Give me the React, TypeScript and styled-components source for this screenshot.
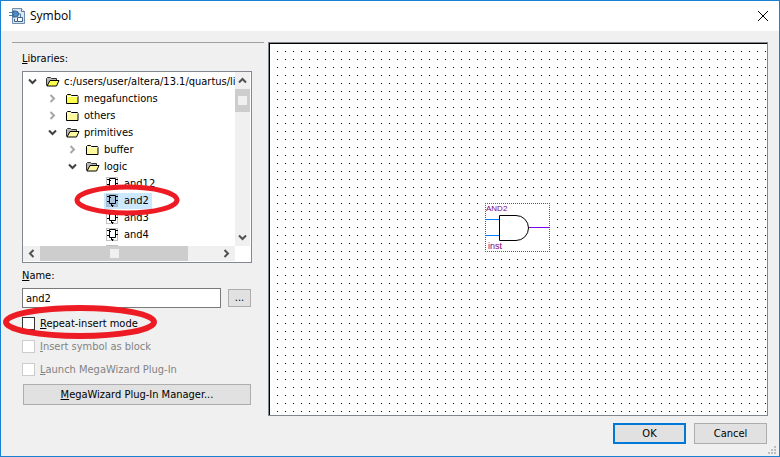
import React from 'react';
import styled, { createGlobalStyle, css } from 'styled-components';

const Global = createGlobalStyle`
  *, *::before, *::after { box-sizing: border-box; }
  body { margin: 0; }
  body, button, input {
    font-family: "DejaVu Sans Condensed", "Open Sans", sans-serif;
    font-size: 11px;
    line-height: 16px;
    color: #000;
  }
`;

const Dialog = styled.main`
  display: flex;
  flex-direction: column;
  min-height: 100vh;
  border: 1px solid #1a80d2;
  background: #f0f0f0;
`;

const TitleBar = styled.header`
  display: flex;
  align-items: center;
  height: 30px;
  padding: 0 9px 0 8px;
  background: #fff;
`;

const Title = styled.h1`
  flex: 1;
  margin: 0 0 0 4px;
  font: 400 12px/16px "Open Sans", sans-serif;
`;

const CloseButton = styled.button`
  display: flex;
  padding: 1px;
  border: 0;
  background: none;
`;

const Content = styled.div`
  flex: 1;
  display: flex;
  gap: 4px;
  padding: 11px 11px 0;
`;

const Sidebar = styled.section`
  flex: none;
  width: 252px;
  padding: 8px 12px 0 10px;
  border-top: 1px solid #a0a0a0;
`;

const FieldLabel = styled.label`
  display: block;
  margin-bottom: 4px;
`;

const TreeBox = styled.div`
  display: grid;
  grid-template: 174px 15px / 1fr 15px;
  margin-bottom: 5px;
  padding: 0 1px 1px 0;
  border: 1px solid #828790;
  background: #fff;
`;

const TreeView = styled.div`
  position: relative;
  min-width: 0;
  overflow: hidden;
`;

const Tree = styled.ul`
  margin: 0;
  padding: 1px 0 0;
  list-style: none;
`;

const TreeRow = styled.li<{ $level: number }>`
  display: flex;
  align-items: center;
  gap: 6px;
  height: 17px;
  padding-left: ${p => 4 + p.$level * 20}px;
  white-space: nowrap;
`;

const Toggle = styled.button`
  display: flex;
  flex: none;
  width: 11px;
  padding: 0;
  border: 0;
  background: none;
`;

const ToggleSpace = styled.span`
  flex: none;
  width: 11px;
`;

const Entry = styled.span<{ $selected?: boolean }>`
  display: flex;
  align-items: center;
  gap: 4px;
  padding: 0 3px 0 2px;
  background: ${p => (p.$selected ? '#cce8ff' : 'transparent')};
  svg { flex: none; }
`;

const ScrollBar = styled.div<{ $vertical?: boolean }>`
  display: flex;
  flex-direction: ${p => (p.$vertical ? 'column' : 'row')};
  background: #f0f0f0;
`;

const ScrollArrow = styled.button`
  display: flex;
  flex: none;
  align-items: center;
  justify-content: center;
  width: 17px;
  height: 17px;
  max-width: 100%;
  max-height: 100%;
  padding: 0;
  border: 0;
  background: none;
`;

const ScrollTrack = styled.div<{ $vertical?: boolean }>`
  display: flex;
  flex: 1;
  flex-direction: ${p => (p.$vertical ? 'column' : 'row')};
`;

const Thumb = styled.div<{ $vertical?: boolean }>`
  display: flex;
  align-items: center;
  justify-content: center;
  background: #cdcdcd;
  ${p => (p.$vertical ? css`height: 23px;` : css`width: 148px;`)}
  &::after {
    content: '';
    width: 9px;
    height: 9px;
    background: #f0f0f0;
  }
`;

const NameRow = styled.div`
  display: flex;
  align-items: center;
  gap: 7px;
  margin-bottom: 4px;
  padding-right: 1px;
`;

const NameInput = styled.input`
  flex: 1;
  min-width: 0;
  height: 20px;
  padding: 1px 3px 0;
  border: 1px solid #7a7a7a;
  border-radius: 0;
  background: #fff;
`;

const PushButton = styled.button<{ $default?: boolean }>`
  height: 21px;
  padding: 0 6px;
  line-height: 17px;
  border: ${p => (p.$default ? '2px solid #0078d7' : '1px solid #adadad')};
  background: #e1e1e1;
`;

const BrowseButton = styled(PushButton)`
  width: 23px;
  height: 18px;
  padding: 0;
  line-height: 16px;
`;

const WizardButton = styled(PushButton)`
  display: block;
  width: calc(100% - 2px);
  margin: 3px 1px 0;
`;

const DialogButton = styled(PushButton)`
  width: 73px;
`;

const CheckRow = styled.label<{ $disabled?: boolean }>`
  position: relative;
  display: flex;
  align-items: center;
  gap: 5px;
  height: 23px;
  color: ${p => (p.$disabled ? '#838383' : '#000')};
`;

const CheckBox = styled.input`
  appearance: none;
  width: 13px;
  height: 13px;
  margin: 0;
  border: 1px solid #333;
  background: #fff;
  &:checked { background: #333; box-shadow: inset 0 0 0 2px #fff; }
  &:disabled { border-color: #ccc; }
`;

const Canvas = styled.section`
  position: relative;
  flex: 1;
  border: 1px solid #828790;
  background: #fff;
`;

const GridDots = styled.svg`
  position: absolute;
  inset: 0;
  width: 100%;
  height: 100%;
  box-shadow: inset 1px 1px #000;
`;

const PlacedSymbol = styled.svg`
  position: absolute;
  left: 216px;
  top: 160px;
`;

const Marker = styled.svg<{ $left: number; $top: number }>`
  position: absolute;
  left: ${p => p.$left}px;
  top: ${p => p.$top}px;
  pointer-events: none;
  fill: none;
  stroke: #ed1c24;
`;

const Footer = styled.footer`
  position: relative;
  display: flex;
  justify-content: flex-end;
  gap: 8px;
  padding: 7px 12px 12px;
`;

const Grip = styled.svg`
  position: absolute;
  right: 3px;
  bottom: 2px;
`;

type Direction = 'up' | 'down' | 'left' | 'right';

const chevrons: Record<Direction, string> = {
  up: 'M2 7.5 5.5 4 9 7.5',
  down: 'M2 3.5 5.5 7 9 3.5',
  left: 'M7.5 2 4 5.5 7.5 9',
  right: 'M3.5 2 7 5.5 3.5 9',
};

function Chevron({ to, color = '#505050' }: { to: Direction; color?: string }) {
  return (
    <svg width="11" height="11" viewBox="0 0 11 11" aria-hidden="true">
      <path d={chevrons[to]} fill="none" stroke={color} strokeWidth="2" />
    </svg>
  );
}

function Folder({ fill }: { fill: string }) {
  return (
    <svg width="14" height="12" viewBox="0 0 14 12" aria-hidden="true">
      <path d="M.5 10.5v-8l1-1h3l1 1h6l.5 1v7z" fill={fill} stroke="#000" />
      <path d="M1 3.5h10.500" stroke="#fffde0" />
    </svg>
  );
}

function OpenFolder({ fill }: { fill: string }) {
  return (
    <svg width="14" height="12" viewBox="0 0 14 12" aria-hidden="true">
      <path d="M.5 9.500v-7l1-1h3l1 1h5v2" fill="#b8b8b8" stroke="#333" />
      <path d="M1 10 4 4.500h9L10.500 10z" fill={fill} stroke="#000" />
    </svg>
  );
}

function Part({ selected }: { selected?: boolean }) {
  return (
    <svg width="14" height="14" viewBox="0 0 14 14" aria-hidden="true">
      <rect x=".5" y=".5" width="11" height="12" fill={selected ? '#a9c6de' : '#fff'} stroke={selected ? '#9db8cf' : '#c0c0c0'} />
      <path d="M3.500 1.500h6v8h-6zM1 2.500h2M1 7.500h2M10 2.500h2M10 6.500h2M5.500 10v1M5 11.500h2.500M6.500 11v2" fill="none" stroke="#000" />
      <path d="M4 3h1v1H4z" />
    </svg>
  );
}

type Node = {
  name: string;
  level: number;
  open?: boolean;
  leaf?: boolean;
  pale?: boolean;
  selected?: boolean;
};

const nodes: Node[] = [
  { name: 'c:/users/user/altera/13.1/quartus/li', level: 0, open: true },
  { name: 'megafunctions', level: 1 },
  { name: 'others', level: 1, pale: true },
  { name: 'primitives', level: 1, open: true, pale: true },
  { name: 'buffer', level: 2, pale: true },
  { name: 'logic', level: 2, open: true, pale: true },
  { name: 'and12', level: 3, leaf: true },
  { name: 'and2', level: 3, leaf: true, selected: true },
  { name: 'and3', level: 3, leaf: true },
  { name: 'and4', level: 3, leaf: true },
  { name: '', level: 3, leaf: true },
];

function TreeItem({ node }: { node: Node }) {
  const fill = node.pale ? '#fff9a0' : '#ffff4d';
  return (
    <TreeRow $level={node.level} role="treeitem" aria-level={node.level + 1} aria-selected={!!node.selected}>
      {node.leaf ? (
        <ToggleSpace />
      ) : (
        <Toggle aria-label={node.open ? 'Collapse' : 'Expand'}>
          <Chevron to={node.open ? 'down' : 'right'} color={node.open ? '#404040' : '#a6a6a6'} />
        </Toggle>
      )}
      <Entry $selected={node.selected}>
        {node.leaf ? <Part selected={node.selected} /> : node.open ? <OpenFolder fill={fill} /> : <Folder fill={fill} />}
        {node.name}
      </Entry>
    </TreeRow>
  );
}

function AppIcon() {
  return (
    <svg width="17" height="17" viewBox="0 0 17 17" aria-hidden="true">
      <path d="M3.500.5h9l3 3v12h-12z" fill="#dce6f0" stroke="#6f8cab" />
      <path d="M12.500.5v3h3" fill="#fff" stroke="#56779a" />
      <path d="M0 4.500h4M0 7.500h4M9 6h2.500v4" fill="none" stroke="#4f7eaa" />
      <path d="M4 3h2.500a3 3 0 0 1 0 6H4z" fill="#4f8cc4" stroke="#335f8c" />
      <path d="M8.500 9.500h5v4h-5zM5.500 11v2.500h3" fill="#fff" stroke="#3f5f82" />
    </svg>
  );
}

function AndGate() {
  return (
    <PlacedSymbol width="65" height="49" viewBox="0 0 65 49" fontFamily="Liberation Sans, Arial, sans-serif" fontSize="8" fill="#800080">
      <rect width="65" height="49" fill="#fff" />
      <path d="M0 .5h65M0 48.500h65M.5 0v49M64.500 0v49" stroke="#008080" strokeDasharray="1 1" />
      <text x="1" y="8">AND2</text>
      <text x="3" y="46" fontSize="9">inst</text>
      <path d="M0 16.500h14M0 32.500h14" stroke="#0080ff" />
      <path d="M44 24.500h21" stroke="#8000ff" />
      <path d="M14.500 12.500H31a12.500 12.500 0 0 1 0 25H14.500z" fill="#fff" stroke="#000" />
    </PlacedSymbol>
  );
}

export default function App() {
  return (
    <>
      <Global />
      <Dialog>
        <TitleBar>
          <AppIcon />
          <Title>Symbol</Title>
          <CloseButton aria-label="Close">
            <svg width="12" height="12" viewBox="0 0 12 12">
              <path d="m1 1 10 10M11 1 1 11" stroke="#000" />
            </svg>
          </CloseButton>
        </TitleBar>
        <Content>
          <Sidebar>
            <FieldLabel as="div" id="libraries"><u>L</u>ibraries:</FieldLabel>
            <TreeBox>
              <TreeView>
                <Tree role="tree" aria-labelledby="libraries">
                  {nodes.map((n, i) => <TreeItem key={i} node={n} />)}
                </Tree>
                <Marker $left={51} $top={112} width="106" height="32">
                  <ellipse cx="53" cy="16" rx="50" ry="13" strokeWidth="5" />
                </Marker>
              </TreeView>
              <ScrollBar $vertical>
                <ScrollArrow aria-label="Scroll up"><Chevron to="up" /></ScrollArrow>
                <ScrollTrack $vertical><Thumb $vertical /></ScrollTrack>
                <ScrollArrow aria-label="Scroll down"><Chevron to="down" /></ScrollArrow>
              </ScrollBar>
              <ScrollBar>
                <ScrollArrow aria-label="Scroll left"><Chevron to="left" /></ScrollArrow>
                <ScrollTrack><Thumb /></ScrollTrack>
                <ScrollArrow aria-label="Scroll right"><Chevron to="right" /></ScrollArrow>
              </ScrollBar>
            </TreeBox>
            <FieldLabel htmlFor="name"><u>N</u>ame:</FieldLabel>
            <NameRow>
              <NameInput id="name" defaultValue="and2" />
              <BrowseButton aria-label="Browse">...</BrowseButton>
            </NameRow>
            <CheckRow>
              <CheckBox type="checkbox" />
              <span><u>R</u>epeat-insert mode</span>
              <Marker $left={-19} $top={-7} width="156" height="36">
                <ellipse cx="77" cy="17" rx="74" ry="14" strokeWidth="6" />
              </Marker>
            </CheckRow>
            <CheckRow $disabled>
              <CheckBox type="checkbox" disabled />
              <span><u>I</u>nsert symbol as block</span>
            </CheckRow>
            <CheckRow $disabled>
              <CheckBox type="checkbox" disabled />
              <span><u>L</u>aunch MegaWizard Plug-In</span>
            </CheckRow>
            <WizardButton><u>M</u>egaWizard Plug-In Manager...</WizardButton>
          </Sidebar>
          <Canvas aria-label="Symbol preview">
            <GridDots>
              <defs>
                <pattern id="dots" width="8" height="8" patternUnits="userSpaceOnUse">
                  <rect width="1" height="1" />
                </pattern>
              </defs>
              <rect x="8" y="8" width="100%" height="100%" fill="url(#dots)" />
            </GridDots>
            <AndGate />
          </Canvas>
        </Content>
        <Footer>
          <DialogButton $default>OK</DialogButton>
          <DialogButton>Cancel</DialogButton>
          <Grip width="8" height="8" viewBox="0 0 8 8" fill="#bfbfbf">
            <path d="M6 0h2v2H6zM3 3h2v2H3zM6 3h2v2H6zM0 6h2v2H0zM3 6h2v2H3zM6 6h2v2H6z" />
          </Grip>
        </Footer>
      </Dialog>
    </>
  );
}
